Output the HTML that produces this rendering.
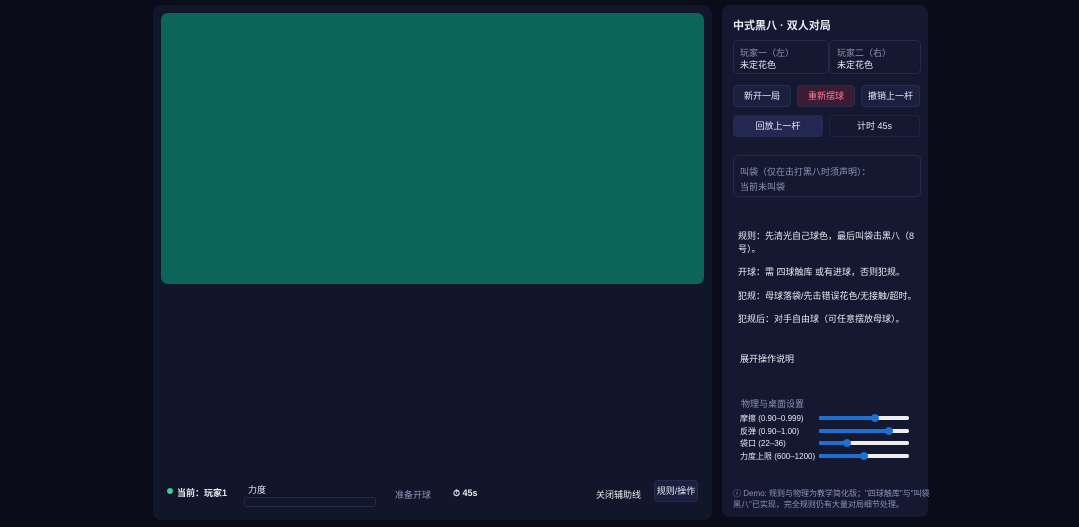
<!DOCTYPE html><html><head><meta charset="utf-8"><style>
body{margin:0;width:1079px;height:527px;background:#0a0c1a;font-family:"Liberation Sans","Noto Sans CJK SC",sans-serif;color:#e6e8f0;position:relative;overflow:hidden;font-size:9px}
.lp{position:absolute;left:153px;top:5px;width:559px;height:515px;background:#12162a;border-radius:8px}
.tb{position:absolute;left:161px;top:13px;width:543px;height:271px;background:#0d6458;border-radius:7px}
.rp{position:absolute;left:722px;top:5px;width:206px;height:512px;background:#141931;border-radius:8px}
.a{position:absolute;white-space:nowrap}
.btn{position:absolute;height:20px;line-height:20px;text-align:center;border-radius:4px;background:#1b2040;border:1px solid #262c50;font-size:9px}
.box{position:absolute;border:1px solid #232a4a;border-radius:5px}
.sl{position:absolute;left:819px;width:90px;height:4px;background:#eee;border-radius:2px}
.sl i{position:absolute;left:0;top:0;height:4px;background:#1e6fd0;border-radius:2px}
.sl b{position:absolute;top:-2px;width:8px;height:8px;border-radius:50%;background:#1e6fd0;margin-left:-4px}
.g{color:#8b93b5}
</style></head><body>
<div class="lp"></div><div class="tb"></div>
<div class="a" style="left:167px;top:488px;width:6px;height:6px;border-radius:50%;background:#3ecf8e"></div>
<div class="a" style="left:177px;top:486px;font-weight:bold">当前：玩家1</div>
<div class="a" style="left:248px;top:483px">力度</div>
<div class="a" style="left:244px;top:497px;width:130px;height:8px;border:1px solid #232a4a;border-radius:3px"></div>
<div class="a g" style="top:488px;left:395px">准备开球</div>
<div class="a" style="left:453px;top:488px;font-weight:bold">⏱ 45s</div>
<div class="a" style="left:596px;top:488px">关闭辅助线</div>
<div class="btn" style="left:654px;top:480px;width:42px">规则/操作</div>
<div class="rp"></div>
<div class="a" style="left:733px;top:17px;font-size:11px;font-weight:bold">中式黑八 · 双人对局</div>
<div class="box" style="left:733px;top:40px;width:94px;height:32px"></div>
<div class="box" style="left:829px;top:40px;width:90px;height:32px"></div>
<div class="a g" style="left:740px;top:46px">玩家一（左）</div><div class="a" style="left:740px;top:58px">未定花色</div>
<div class="a g" style="left:837px;top:46px">玩家二（右）</div><div class="a" style="left:837px;top:58px">未定花色</div>
<div class="btn" style="left:733px;top:85px;width:56px">新开一局</div>
<div class="btn" style="left:797px;top:85px;width:56px;color:#ff7a90;background:#3a1c34">重新摆球</div>
<div class="btn" style="left:861px;top:85px;width:57px">撤销上一杆</div>
<div class="btn" style="left:733px;top:115px;width:88px;background:#222850">回放上一杆</div>
<div class="btn" style="left:829px;top:115px;width:89px;background:transparent;border-color:#1d2340">计时 45s</div>
<div class="box" style="left:733px;top:155px;width:186px;height:40px"></div>
<div class="a g" style="left:740px;top:165px">叫袋（仅在击打黑八时须声明）：</div>
<div class="a g" style="left:740px;top:180px">当前未叫袋</div>
<div class="a" style="left:738px;top:229px">规则：先清光自己球色，最后叫袋击黑八（8</div>
<div class="a" style="left:738px;top:242px">号）。</div>
<div class="a" style="left:738px;top:265px">开球：需 四球触库 或有进球，否则犯规。</div>
<div class="a" style="left:738px;top:289px">犯规：母球落袋/先击错误花色/无接触/超时。</div>
<div class="a" style="left:738px;top:312px">犯规后：对手自由球（可任意摆放母球）。</div>
<div class="a" style="left:740px;top:352px">展开操作说明</div>
<div class="a g" style="left:741px;top:397px">物理与桌面设置</div>
<div class="a" style="left:740px;top:413px;font-size:8px">摩擦 (0.90–0.999)</div>
<div class="a" style="left:740px;top:426px;font-size:8px">反弹 (0.90–1.00)</div>
<div class="a" style="left:740px;top:438px;font-size:8px">袋口 (22–36)</div>
<div class="a" style="left:740px;top:451px;font-size:8px">力度上限 (600–1200)</div>
<div class="sl" style="top:416px"><i style="width:56px"></i><b style="left:56px"></b></div>
<div class="sl" style="top:429px"><i style="width:70px"></i><b style="left:70px"></b></div>
<div class="sl" style="top:441px"><i style="width:28px"></i><b style="left:28px"></b></div>
<div class="sl" style="top:454px"><i style="width:45px"></i><b style="left:45px"></b></div>
<div class="a g" style="left:733px;top:488px;font-size:8px">ⓘ Demo: 规则与物理为教学简化版；"四球触库"与"叫袋</div>
<div class="a g" style="left:733px;top:499px;font-size:8px">黑八"已实现，完全规则仍有大量对局细节处理。</div>
</body></html>
